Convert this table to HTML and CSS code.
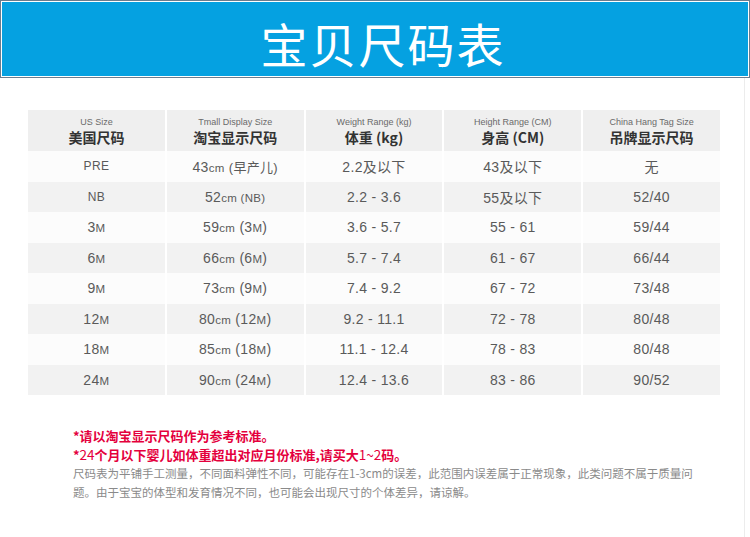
FILE: index.html
```html
<!DOCTYPE html>
<html lang="zh-CN">
<head>
<meta charset="utf-8">
<title>宝贝尺码表</title>
<link rel="stylesheet" href="styles.css">
</head>
<body>
<header class="banner">
  <div class="banner-inner"><h1 class="title">宝贝尺码表</h1></div>
</header>
<main class="content">
  <table class="sizes">
    <thead>
      <tr>
        <th><span class="en">US Size</span><span class="zh">美国尺码</span></th>
        <th><span class="en">Tmall Display Size</span><span class="zh">淘宝显示尺码</span></th>
        <th><span class="en">Weight Range (kg)</span><span class="zh">体重 (kg)</span></th>
        <th><span class="en">Height Range (CM)</span><span class="zh">身高 (CM)</span></th>
        <th><span class="en">China Hang Tag Size</span><span class="zh">吊牌显示尺码</span></th>
      </tr>
    </thead>
    <tbody>
      <tr><td class="sm">PRE</td><td>43<span class="s">cm</span> <span class="p">(早产儿)</span></td><td>2.2及以下</td><td>43及以下</td><td>无</td></tr>
      <tr><td class="sm">NB</td><td>52<span class="s">cm (NB)</span></td><td>2.2 - 3.6</td><td>55及以下</td><td>52/40</td></tr>
      <tr><td>3<span class="s">M</span></td><td>59<span class="s">cm</span> (3<span class="s">M</span>)</td><td>3.6 - 5.7</td><td>55 - 61</td><td>59/44</td></tr>
      <tr><td>6<span class="s">M</span></td><td>66<span class="s">cm</span> (6<span class="s">M</span>)</td><td>5.7 - 7.4</td><td>61 - 67</td><td>66/44</td></tr>
      <tr><td>9<span class="s">M</span></td><td>73<span class="s">cm</span> (9<span class="s">M</span>)</td><td>7.4 - 9.2</td><td>67 - 72</td><td>73/48</td></tr>
      <tr><td>12<span class="s">M</span></td><td>80<span class="s">cm</span> (12<span class="s">M</span>)</td><td>9.2 - 11.1</td><td>72 - 78</td><td>80/48</td></tr>
      <tr><td>18<span class="s">M</span></td><td>85<span class="s">cm</span> (18<span class="s">M</span>)</td><td>11.1 - 12.4</td><td>78 - 83</td><td>80/48</td></tr>
      <tr><td>24<span class="s">M</span></td><td>90<span class="s">cm</span> (24<span class="s">M</span>)</td><td>12.4 - 13.6</td><td>83 - 86</td><td>90/52</td></tr>
    </tbody>
  </table>
  <div class="notes">
    <p class="warn">*请以淘宝显示尺码作为参考标准。</p>
    <p class="warn">*<span class="thin">24</span>个月以下婴儿如体重超出对应月份标准,请买大<span class="thin">1~2</span>码。</p>
    <p class="info">尺码表为平铺手工测量，不同面料弹性不同，可能存在1-3cm的误差，此范围内误差属于正常现象，此类问题不属于质量问题。由于宝宝的体型和发育情况不同，也可能会出现尺寸的个体差异，请谅解。</p>
  </div>
</main>
</body>
</html>
```
FILE: styles.css
```css
* { box-sizing: border-box; }
html, body { margin: 0; padding: 0; background: #fff; }
body {
  width: 750px;
  height: 537px;
  overflow: hidden;
  font-family: "Liberation Sans", "Noto Sans CJK SC", sans-serif;
}
.banner {
  border: 1px solid #6c7c8e;
  padding: 1px;
  background: #fff;
  height: 78px;
}
.banner-inner {
  background: #05a1e1;
  height: 74px;
  display: flex;
  align-items: center;
  justify-content: center;
}
.title {
  margin: 0;
  color: #fff;
  font-family: "Noto Sans CJK SC", sans-serif;
  font-weight: 400;
  font-size: 47px;
  line-height: 1;
  letter-spacing: 2px;
  padding-top: 6px;
  padding-left: 16px;
}
.content {
  width: 745px;
  height: 459px;
  border-right: 1px solid #ececec;
  padding-top: 32px;
}
.sizes {
  margin-left: 26px;
  width: 696px;
  border-collapse: separate;
  border-spacing: 2px 0;
  table-layout: fixed;
}
.sizes th {
  background: #efefef;
  height: 41px;
  padding: 0;
  font-weight: 400;
  vertical-align: middle;
}
.sizes th .en {
  display: block;
  font-size: 9px;
  line-height: 11px;
  color: #6a6a6a;
  padding-top: 1px;
}
.sizes th .zh {
  display: block;
  font-family: "Noto Sans CJK SC", sans-serif;
  font-weight: 700;
  font-size: 14px;
  line-height: 18px;
  color: #333;
}
.sizes td {
  height: 30.5px;
  padding: 0;
  text-align: center;
  vertical-align: middle;
  font-size: 14px;
  letter-spacing: 0.3px;
  color: #5a5a5a;
  background: #fcfcfc;
  font-family: "Liberation Sans", "Noto Sans CJK SC", sans-serif;
}
.sizes tbody tr:nth-child(even) td { background: #f2f2f2; }
.sizes td.sm { font-size: 12px; }
.sizes .s { font-size: 11.5px; }
.sizes .p { font-size: 13px; }
.notes {
  margin: 31px 0 0 73px;
  width: 625px;
}
.notes p {
  margin: 0;
  font-family: "Noto Sans CJK SC", sans-serif;
  line-height: 19px;
}
.warn {
  color: #e4003d;
  font-weight: 700;
  font-size: 13px;
}
.warn .thin { font-weight: 400; font-size: 13.5px; }
.info {
  color: #8a8a8a;
  font-size: 11.5px;
}
```
